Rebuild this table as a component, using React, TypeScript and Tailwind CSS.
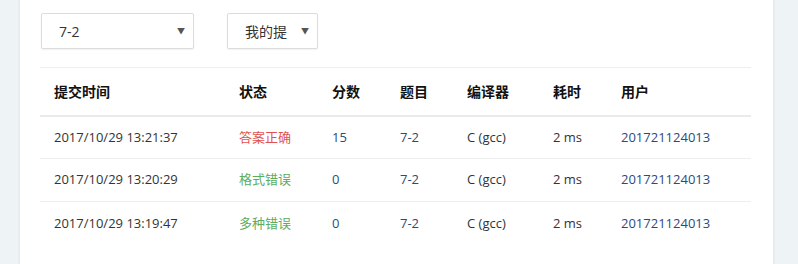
const rows = [
  { time: '2017/10/29 13:21:37', status: '答案正确', ok: true, score: '15' },
  { time: '2017/10/29 13:20:29', status: '格式错误', ok: false, score: '0' },
  { time: '2017/10/29 13:19:47', status: '多种错误', ok: false, score: '0' },
];

const font = { fontFamily: '"Open Sans", "Noto Sans CJK SC", sans-serif' };

function Select({ label, width }: { label: string; width: string }) {
  return (
    <div
      className={`${width} h-9 flex items-center justify-between border border-[#dcdcdc] rounded-[2px] bg-white shadow-[0_1px_2px_rgba(0,0,0,0.06)] pl-[17px] pr-[8px] text-[14px] text-[#333]`}
    >
      <span>{label}</span>
      <span className="text-[8px] text-[#555]">▼</span>
    </div>
  );
}

export default function App() {
  return (
    <div className="w-[798px] h-[264px] bg-[#eef3f6] flex overflow-hidden" style={font}>
      <div className="w-[18px] shrink-0" />
      <div className="w-[757px] h-full bg-white border-x-2 border-[#e8ecef] pl-[20px] pr-[22px] pt-[13px]">
        <div className="flex gap-[33px] ml-px">
          <Select label="7-2" width="w-[153px]" />
          <Select label="我的提" width="w-[91px]" />
        </div>

        <table className="mt-[18px] w-[711px] table-fixed border-collapse text-[13px] text-[#333]">
          <colgroup>
            <col className="w-[185px]" />
            <col className="w-[93px]" />
            <col className="w-[68px]" />
            <col className="w-[67px]" />
            <col className="w-[86px]" />
            <col className="w-[68px]" />
            <col />
          </colgroup>
          <thead>
            <tr className="border-t border-[#eeeeee] border-b-2 border-b-[#eaeaea] h-[48px]">
              {['提交时间', '状态', '分数', '题目', '编译器', '耗时', '用户'].map((h) => (
                <th key={h} className="text-left font-bold text-[14px] pl-[14px] text-[#111]">
                  {h}
                </th>
              ))}
            </tr>
          </thead>
          <tbody>
            {rows.map((r, i) => (
              <tr key={r.time} className={`h-[43px] ${i < rows.length - 1 ? 'border-b border-[#eeeeee]' : ''}`}>
                <td className="pl-[14px]">{r.time}</td>
                <td className={`pl-[14px] ${r.ok ? 'text-[#e05252]' : 'text-[#5cac5c]'}`}>{r.status}</td>
                <td className="pl-[14px] text-[#2a4b7c]">{r.score}</td>
                <td className="pl-[14px] text-[#2a4b7c]">7-2</td>
                <td className="pl-[14px]">C (gcc)</td>
                <td className="pl-[14px]">2 ms</td>
                <td className="pl-[14px] text-[#2a4b7c]">201721124013</td>
              </tr>
            ))}
          </tbody>
        </table>
      </div>
    </div>
  );
}
